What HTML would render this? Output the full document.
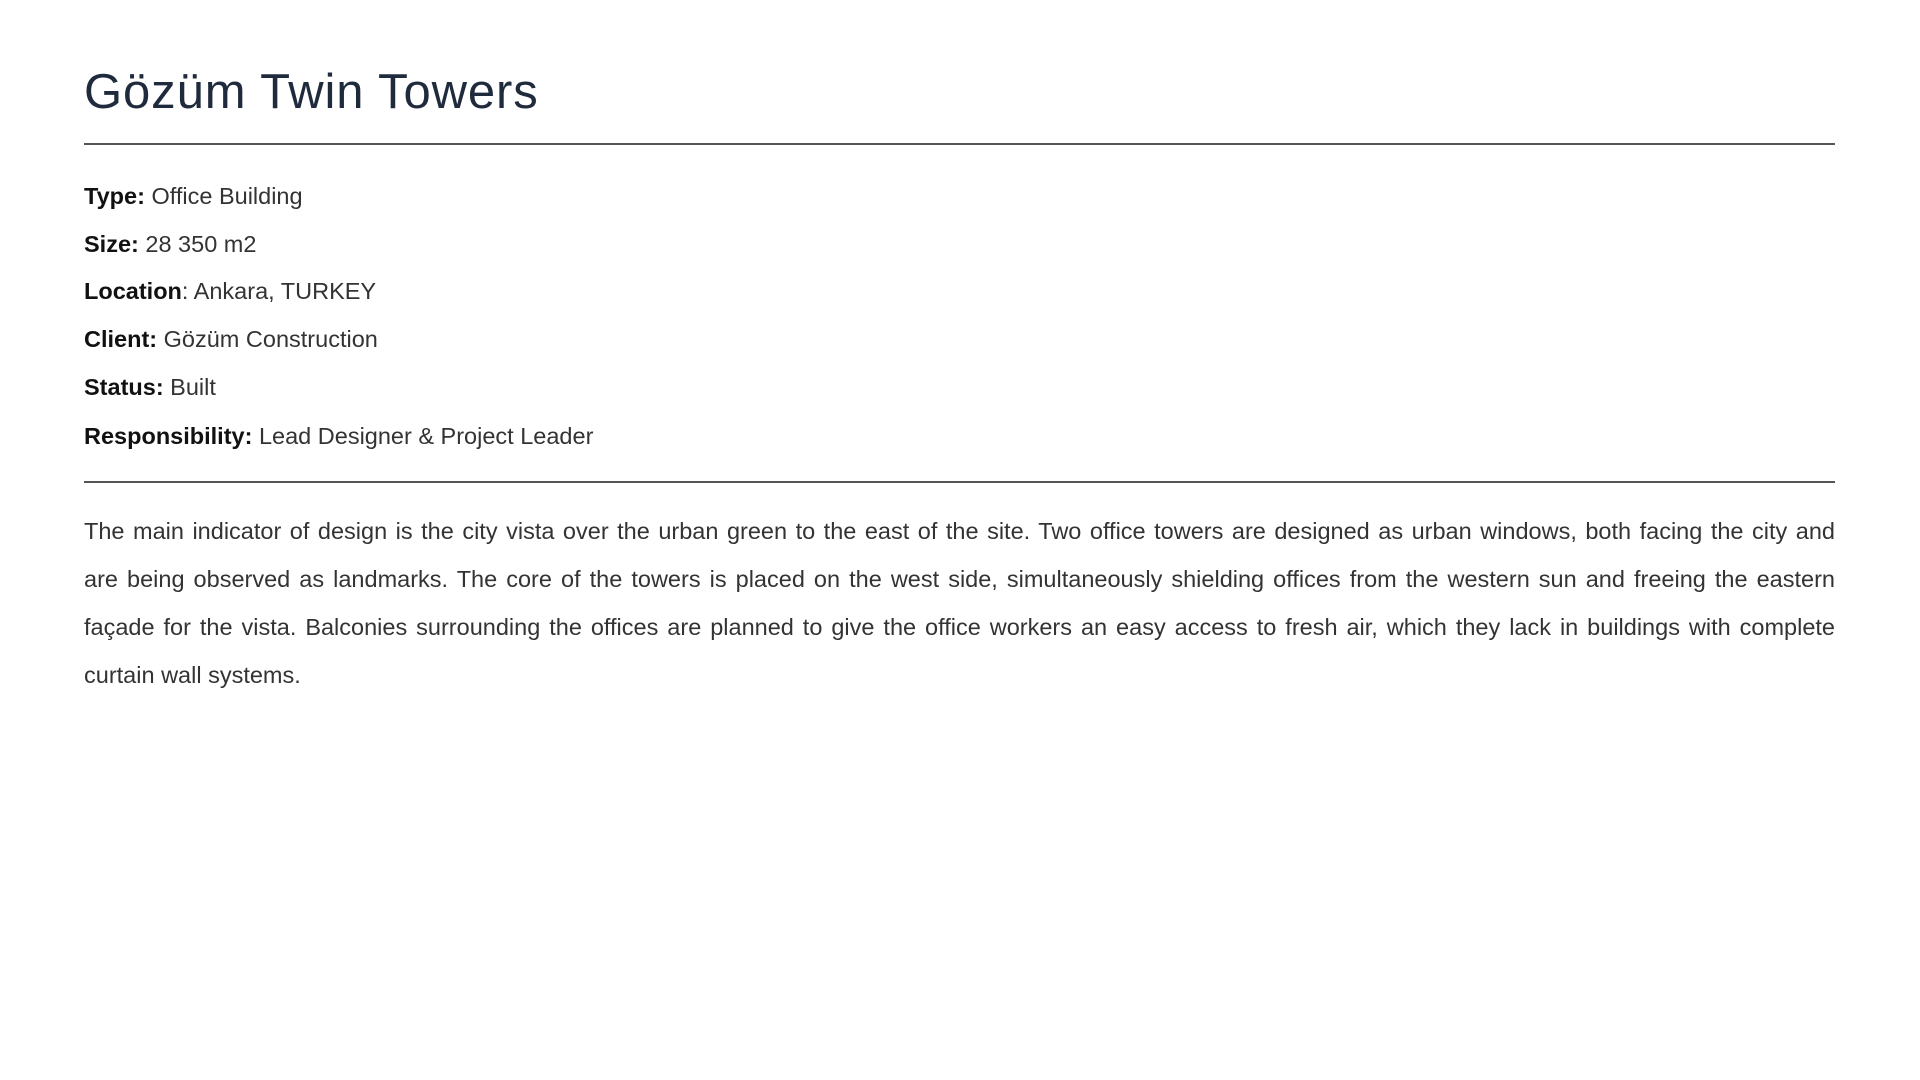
<!DOCTYPE html>
<html><head><meta charset="utf-8"><style>
html,body{margin:0;padding:0;background:#fff;width:1920px;height:1080px;overflow:hidden}
body{font-family:"Liberation Sans","DejaVu Sans",sans-serif;color:#222}
.wrap{position:absolute;left:84px;width:1751px;top:0}
h1{position:absolute;top:64px;left:0;margin:0;font-weight:normal;font-size:49px;color:#1f2b3d;letter-spacing:0.9px;white-space:nowrap}
.hr{position:absolute;left:0;width:1751px;height:2px;background:#555}
.row{position:absolute;left:0;font-size:23.5px;white-space:nowrap;color:#333;line-height:30px}
.row b{color:#111;font-weight:bold}
.p{position:absolute;left:0;top:507px;width:1751px;font-size:23.5px;line-height:48px;color:#333}
.p span{display:block;text-align:justify;text-align-last:justify;white-space:nowrap}
.p span.last{text-align-last:left}
</style></head><body><div class="wrap">
<h1>Gözüm Twin Towers</h1>
<div class="hr" style="top:143px"></div>
<div class="row" style="top:181px"><b>Type:</b> Office Building</div>
<div class="row" style="top:229px"><b>Size:</b> 28 350 m2</div>
<div class="row" style="top:276px"><b>Location</b>: Ankara, TURKEY</div>
<div class="row" style="top:324px"><b>Client:</b> Gözüm Construction</div>
<div class="row" style="top:372px"><b>Status:</b> Built</div>
<div class="row" style="top:421px"><b>Responsibility:</b> Lead Designer &amp; Project Leader</div>
<div class="hr" style="top:481px"></div>
<div class="p">
<span>The main indicator of design is the city vista over the urban green to the east of the site. Two office towers are designed as urban windows, both facing the city and</span>
<span>are being observed as landmarks. The core of the towers is placed on the west side, simultaneously shielding offices from the western sun and freeing the eastern</span>
<span>façade for the vista. Balconies surrounding the offices are planned to give the office workers an easy access to fresh air, which they lack in buildings with complete</span>
<span class="last">curtain wall systems.</span>
</div>
</div></body></html>
